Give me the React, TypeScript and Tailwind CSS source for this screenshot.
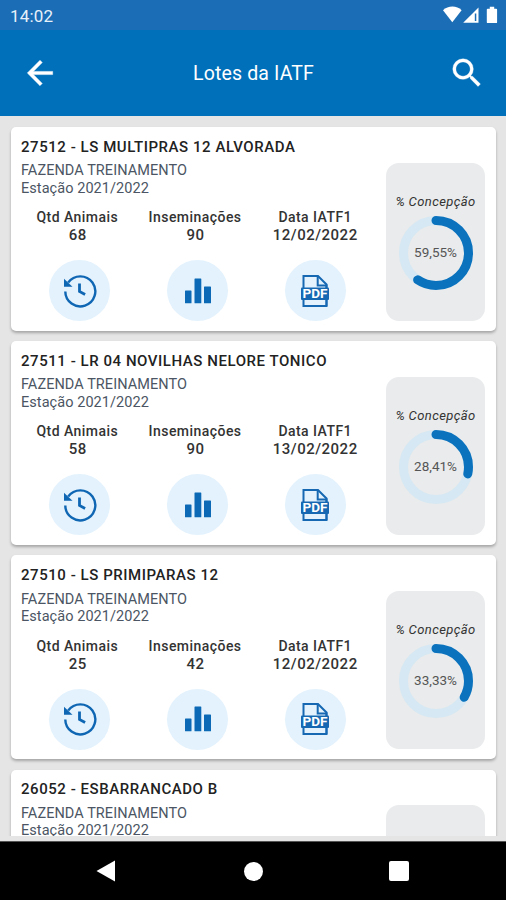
import type { ReactNode } from "react";
import clsx from "clsx";

type Lote = {
  id: string;
  title: string;
  farm: string;
  season: string;
  stats?: {
    animals: string;
    inseminations: string;
    date: string;
  };
  rate?: number;
  rateLabel?: string;
};

const lotes: Lote[] = [
  {
    id: "27512",
    title: "27512 - LS MULTIPRAS 12 ALVORADA",
    farm: "FAZENDA TREINAMENTO",
    season: "Estação 2021/2022",
    stats: { animals: "68", inseminations: "90", date: "12/02/2022" },
    rate: 59.55,
    rateLabel: "59,55%",
  },
  {
    id: "27511",
    title: "27511 - LR 04 NOVILHAS NELORE TONICO",
    farm: "FAZENDA TREINAMENTO",
    season: "Estação 2021/2022",
    stats: { animals: "58", inseminations: "90", date: "13/02/2022" },
    rate: 28.41,
    rateLabel: "28,41%",
  },
  {
    id: "27510",
    title: "27510 - LS PRIMIPARAS 12",
    farm: "FAZENDA TREINAMENTO",
    season: "Estação 2021/2022",
    stats: { animals: "25", inseminations: "42", date: "12/02/2022" },
    rate: 33.33,
    rateLabel: "33,33%",
  },
  {
    id: "26052",
    title: "26052 - ESBARRANCADO B",
    farm: "FAZENDA TREINAMENTO",
    season: "Estação 2021/2022",
  },
];

function StatusBar() {
  return (
    <div className="flex h-[30px] shrink-0 items-center justify-between bg-[#1b6db5] pr-[8px] pl-[10px] text-[#e8f1fa]">
      <span className="pt-[2px] text-[17px] leading-none tracking-[0.2px]">14:02</span>
      <svg width="55" height="18" viewBox="0 0 55 18" fill="#fff">
        <path d="M0 4.2C5 -.6 14 -.6 18.6 4.2L9.3 16.2Z" />
        <path d="M35.5 1.5v15.3H20.2Z" />
        <path d="M31.8 7.5h1.5v7.5h-1.5z" fill="#1b6db5" />
        <path d="M46.8 .8h4.4v1.9h2a.9.9 0 0 1 .9.9v12.6a.9.9 0 0 1-.9.9h-8.5a.9.9 0 0 1-.9-.9V3.6a.9.9 0 0 1 .9-.9h2.1Z" />
      </svg>
    </div>
  );
}

function Header() {
  return (
    <header className="flex h-[86px] shrink-0 items-center justify-between bg-[#0070ba] pr-[20px] pl-[21px] text-white">
      <svg width="38" height="38" viewBox="0 0 24 24" fill="#fff" stroke="#fff" strokeWidth="0.3">
        <path d="M20 11H7.83l5.59-5.59L12 4l-8 8 8 8 1.41-1.41L7.83 13H20v-2z" />
      </svg>
      <h1 className="pt-[2px] text-[19.5px] tracking-[0.15px]">Lotes da IATF</h1>
      <svg width="38" height="38" viewBox="0 0 24 24" fill="#fff" stroke="#fff" strokeWidth="0.2">
        <path d="M15.5 14h-.79l-.28-.27A6.471 6.471 0 0 0 16 9.5 6.5 6.5 0 1 0 9.5 16c1.61 0 3.09-.59 4.23-1.57l.27.28v.79l5 4.99L20.49 19l-4.99-5zm-6 0C7.01 14 5 11.99 5 9.5S7.01 5 9.5 5 14 7.01 14 9.5 11.99 14 9.5 14z" />
      </svg>
    </header>
  );
}

function HistoryIcon() {
  return (
    <svg width="34" height="34" viewBox="0 0 34 34" fill="none" stroke="#0f66b3" strokeWidth="2.4">
      <path d="M2.3 17.5A15 15 0 1 0 5.2 8.5" />
      <path d="M1 4.8V12.8H9.5Z" fill="#0f66b3" stroke="none" />
      <path d="M16.5 9.5v8l5.6 3" strokeWidth="2.8" />
    </svg>
  );
}

function ChartIcon() {
  return (
    <svg width="26" height="26" viewBox="0 0 26 26" fill="#0b69b5">
      <rect x="0" y="12.5" width="6.5" height="12.8" rx=".6" />
      <rect x="9.5" y="0.5" width="6.8" height="24.8" rx=".6" />
      <rect x="19" y="8.5" width="7" height="16.8" rx=".6" />
    </svg>
  );
}

function PdfIcon() {
  return (
    <svg width="30" height="34" viewBox="0 0 30 34" fill="none" stroke="#1668b3" strokeWidth="2">
      <path d="M3.5 14V2H18l8.5 8.5V32h-23V20" />
      <path d="M26.5 10.5V32M17.7 3v8.5h9" />
      <rect x="1" y="13.5" width="28" height="12.5" rx="1" fill="#1668b3" stroke="none" />
      <text
        x="15"
        y="24.4"
        fill="#fff"
        stroke="none"
        textAnchor="middle"
        textLength="25"
        lengthAdjust="spacingAndGlyphs"
        fontSize="13.5"
        fontWeight="700"
      >
        PDF
      </text>
    </svg>
  );
}

type StatProps = {
  label: string;
  value: string;
  icon: ReactNode;
  centered?: boolean;
};

function Stat({ label, value, icon, centered }: StatProps) {
  return (
    <div className="flex w-[117.7px] flex-col items-center text-[14px] leading-[18px] font-medium whitespace-nowrap text-[#333]">
      <span className={clsx("tracking-[0.45px]", !centered && "-ml-[5px]")}>{label}</span>
      <span className={clsx("text-[15px] tracking-[0.5px]", !centered && "-ml-[4px]")}>{value}</span>
      <div className="mt-[16px] flex size-[61px] items-center justify-center rounded-full bg-[#e3f2fd]">
        {icon}
      </div>
    </div>
  );
}

function Gauge({ rate, label }: { rate: number; label: string }) {
  return (
    <>
      <span className="text-[13px] leading-[18px] tracking-[0.4px] whitespace-nowrap text-[#333] italic">
        % Concepção
      </span>
      <svg className="mt-[5px] ml-[1px]" width="74" height="74" viewBox="0 0 74 74" fill="none">
        <circle cx="37" cy="37" r="32.5" stroke="#d6e8f3" strokeWidth="9" />
        <circle
          cx="37"
          cy="37"
          r="32.5"
          stroke="#0b72bd"
          strokeWidth="9"
          strokeLinecap="round"
          pathLength="100"
          strokeDasharray={`${rate} 100`}
          transform="rotate(-90 37 37)"
        />
        <text x="36.5" y="41" textAnchor="middle" fontSize="13.5" fill="#555">
          {label}
        </text>
      </svg>
    </>
  );
}

function LoteCard({ lote }: { lote: Lote }) {
  return (
    <article className="flex h-[204px] shrink-0 justify-between rounded-[5px] bg-white pr-[11px] pl-[10px] shadow-[0_2px_3px_rgba(0,0,0,0.28)]">
      <div className="pt-[10.6px]">
        <h2 className="text-[15px] leading-[18px] font-medium tracking-[0.55px] whitespace-nowrap text-[#222]">
          {lote.title}
        </h2>
        <div className="mt-[6.6px] text-[14.5px] leading-[17.5px] tracking-[0.06px] text-[#4b5563]">
          <p>{lote.farm}</p>
          <p>{lote.season}</p>
        </div>
        {lote.stats ? (
          <div className="mt-[11px] flex">
            <Stat label="Qtd Animais" value={lote.stats.animals} icon={<HistoryIcon />} />
            <Stat label="Inseminações" value={lote.stats.inseminations} icon={<ChartIcon />} />
            <Stat label="Data IATF1" value={lote.stats.date} icon={<PdfIcon />} centered />
          </div>
        ) : null}
      </div>
      <div className="pt-[35.5px]">
        <div className="flex h-[158px] w-[99px] flex-col items-center rounded-[13px] bg-[#e9ebec] pt-[30px]">
          {lote.rate !== undefined ? <Gauge rate={lote.rate} label={lote.rateLabel ?? ""} /> : null}
        </div>
      </div>
    </article>
  );
}

function NavBar() {
  return (
    <nav className="flex h-[59px] shrink-0 items-center justify-between border-t border-[#555] bg-black pr-[97px] pl-[96px]">
      <svg width="20" height="22" viewBox="0 0 20 22" fill="#fff">
        <path d="M19 .5v21L.5 11Z" />
      </svg>
      <div className="ml-[2px] size-[19px] rounded-full bg-white" />
      <div className="size-[20px] rounded-[2px] bg-white" />
    </nav>
  );
}

export default function App() {
  return (
    <div className="flex h-[900px] w-[506px] flex-col overflow-hidden bg-[#e5e5e5] font-['Roboto','Liberation_Sans',sans-serif]">
      <StatusBar />
      <Header />
      <main className="mb-[5px] flex min-h-0 flex-1 flex-col gap-[10.2px] overflow-hidden pt-[11px] pr-[10px] pl-[11px]">
        {lotes.map((lote) => (
          <LoteCard key={lote.id} lote={lote} />
        ))}
      </main>
      <NavBar />
    </div>
  );
}
